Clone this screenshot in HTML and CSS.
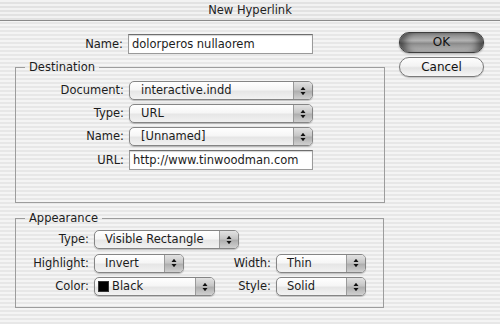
FILE: index.html
```
<!DOCTYPE html>
<html>
<head>
<meta charset="utf-8">
<link rel="stylesheet" href="styles.css">
</head>
<body>
<div class="window">
  <div class="titlebar">New Hyperlink</div>
  <div class="content">
    <div class="main">
      <div class="name-row">
        <span class="lbl">Name:</span>
        <div class="field name-field">dolorperos nullaorem</div>
      </div>
      <fieldset class="group dest">
        <legend>Destination</legend>
        <div class="dest-grid">
          <span class="lbl">Document:</span>
          <div class="popup w-dest"><span class="pv">interactive.indd</span><span class="arrows"><svg width="6" height="10" viewBox="0 0 6 10"><path d="M0.5 4 L3 0.8 L5.5 4Z M0.5 6 L3 9.2 L5.5 6Z"/></svg></span></div>
          <span class="lbl">Type:</span>
          <div class="popup w-dest"><span class="pv">URL</span><span class="arrows"><svg width="6" height="10" viewBox="0 0 6 10"><path d="M0.5 4 L3 0.8 L5.5 4Z M0.5 6 L3 9.2 L5.5 6Z"/></svg></span></div>
          <span class="lbl">Name:</span>
          <div class="popup w-dest"><span class="pv">[Unnamed]</span><span class="arrows"><svg width="6" height="10" viewBox="0 0 6 10"><path d="M0.5 4 L3 0.8 L5.5 4Z M0.5 6 L3 9.2 L5.5 6Z"/></svg></span></div>
          <span class="lbl">URL:</span>
          <div class="field url-field">http://www.tinwoodman.com</div>
        </div>
      </fieldset>
      <fieldset class="group appear">
        <legend>Appearance</legend>
        <div class="app-grid">
          <span class="lbl">Type:</span>
          <div class="popup w-type span3"><span class="pv">Visible Rectangle</span><span class="arrows"><svg width="6" height="10" viewBox="0 0 6 10"><path d="M0.5 4 L3 0.8 L5.5 4Z M0.5 6 L3 9.2 L5.5 6Z"/></svg></span></div>
          <span class="lbl">Highlight:</span>
          <div class="popup w-sm"><span class="pv">Invert</span><span class="arrows"><svg width="6" height="10" viewBox="0 0 6 10"><path d="M0.5 4 L3 0.8 L5.5 4Z M0.5 6 L3 9.2 L5.5 6Z"/></svg></span></div>
          <span class="lbl">Width:</span>
          <div class="popup w-sm"><span class="pv">Thin</span><span class="arrows"><svg width="6" height="10" viewBox="0 0 6 10"><path d="M0.5 4 L3 0.8 L5.5 4Z M0.5 6 L3 9.2 L5.5 6Z"/></svg></span></div>
          <span class="lbl">Color:</span>
          <div class="popup w-color"><span class="pv swatch-pv"><span class="swatch"></span>Black</span><span class="arrows"><svg width="6" height="10" viewBox="0 0 6 10"><path d="M0.5 4 L3 0.8 L5.5 4Z M0.5 6 L3 9.2 L5.5 6Z"/></svg></span></div>
          <span class="lbl">Style:</span>
          <div class="popup w-sm"><span class="pv">Solid</span><span class="arrows"><svg width="6" height="10" viewBox="0 0 6 10"><path d="M0.5 4 L3 0.8 L5.5 4Z M0.5 6 L3 9.2 L5.5 6Z"/></svg></span></div>
        </div>
      </fieldset>
    </div>
    <div class="buttons">
      <div class="btn default">OK</div>
      <div class="btn">Cancel</div>
    </div>
  </div>
</div>
</body>
</html>
```
FILE: styles.css
```
html, body {
  margin: 0;
  padding: 0;
}
body {
  width: 500px;
  height: 324px;
  overflow: hidden;
  font-family: "DejaVu Sans", sans-serif;
  font-size: 11.5px;
  color: #1c1c1c;
  background: repeating-linear-gradient(to bottom, #f4f4f4 0, #f4f4f4 2px, #e7e7e7 2px, #e7e7e7 4px);
}
.window {
  width: 500px;
  height: 324px;
}
.titlebar {
  height: 20px;
  line-height: 21px;
  text-align: center;
  font-size: 11.5px;
  color: #222;
  border-bottom: 1px solid #8a8a8a;
  background: repeating-linear-gradient(to bottom, #f2f2f2 0, #f2f2f2 2px, #e2e2e2 2px, #e2e2e2 4px);
}
.content {
  display: flex;
  align-items: flex-start;
}
.main {
  width: 385px;
  padding: 13px 0 0 15px;
  box-sizing: border-box;
  display: flex;
  flex-direction: column;
}
.lbl {
  text-align: right;
  white-space: nowrap;
  line-height: 19px;
}
.name-row {
  display: grid;
  grid-template-columns: 108px 185px;
  column-gap: 5px;
  align-items: center;
}
.field {
  height: 20px;
  box-sizing: border-box;
  background: #fff;
  border: 1px solid #9a9a9a;
  border-top-color: #6e6e6e;
  box-shadow: inset 0 1px 1px rgba(0,0,0,0.18);
  padding-left: 3px;
  line-height: 18px;
  white-space: nowrap;
  overflow: hidden;
}
.group {
  margin: 0;
  min-width: 0;
  border: 1px solid #9c9c9c;
  box-sizing: border-box;
  padding: 0;
}
.group legend {
  padding: 0 4px;
  margin-left: 9px;
  line-height: 14px;
  font-size: 11.5px;
}
.dest {
  width: 370px;
  margin-top: 6px;
  padding: 7px 0 32px 0;
}
.appear {
  width: 369px;
  margin-top: 8px;
  padding: 5px 0 11px 0;
}
.dest-grid {
  display: grid;
  grid-template-columns: 108px 184px;
  column-gap: 5px;
  row-gap: 4px;
  align-items: center;
}
.app-grid {
  display: grid;
  grid-template-columns: 73px 121px 51px 90px;
  column-gap: 5px;
  row-gap: 4.5px;
  align-items: center;
}
.span3 {
  grid-column: 2 / 5;
  justify-self: start;
}
.popup {
  height: 19px;
  box-sizing: border-box;
  display: flex;
  border: 1px solid #858585;
  border-radius: 5px;
  background: linear-gradient(to bottom, #ffffff 0%, #f6f6f6 45%, #e6e6e6 55%, #f2f2f2 100%);
  box-shadow: 0 1px 1px rgba(0,0,0,0.22);
  overflow: hidden;
}
.w-dest { width: 184px; }
.w-type { width: 145px; }
.w-sm { width: 90px; }
.w-color { width: 121px; }
.pv {
  flex: 1;
  padding-left: 10px;
  line-height: 17px;
  white-space: nowrap;
  overflow: hidden;
}
.dest .pv { padding-left: 11px; }
.swatch-pv {
  display: flex;
  align-items: center;
  padding-left: 3px;
}
.swatch {
  width: 11px;
  height: 11px;
  background: #000;
  margin-right: 3px;
  border: 1px solid #333;
  box-sizing: border-box;
}
.arrows {
  width: 18px;
  display: flex;
  align-items: center;
  justify-content: center;
  border-left: 1px solid #9a9a9a;
  background: linear-gradient(to bottom, #e2e2e2 0%, #c6c6c6 45%, #afafaf 55%, #d0d0d0 100%);
}
.arrows svg {
  display: block;
  fill: #111;
}
.buttons {
  margin: 11px 0 0 14px;
  display: flex;
  flex-direction: column;
  gap: 4px;
}
.btn {
  width: 85px;
  height: 20px;
  box-sizing: border-box;
  border: 1px solid #7a7a7a;
  border-radius: 10px;
  text-align: center;
  line-height: 18px;
  font-size: 12px;
  color: #111;
  background: linear-gradient(to bottom, #fdfdfd 0%, #f3f3f3 45%, #e4e4e4 55%, #f6f6f6 100%);
  box-shadow: 0 1px 1px rgba(0,0,0,0.2);
}
.btn.default {
  height: 21px;
  line-height: 19px;
  border-color: #3e3e3e;
  background: linear-gradient(to bottom, #8e8e8e 0%, #b2b2b2 40%, #8a8a8a 55%, #c2c2c2 100%);
  box-shadow: inset 8px 0 7px -3px rgba(0,0,0,0.5), inset -8px 0 7px -3px rgba(0,0,0,0.5), 0 1px 2px rgba(0,0,0,0.3);
}
```
